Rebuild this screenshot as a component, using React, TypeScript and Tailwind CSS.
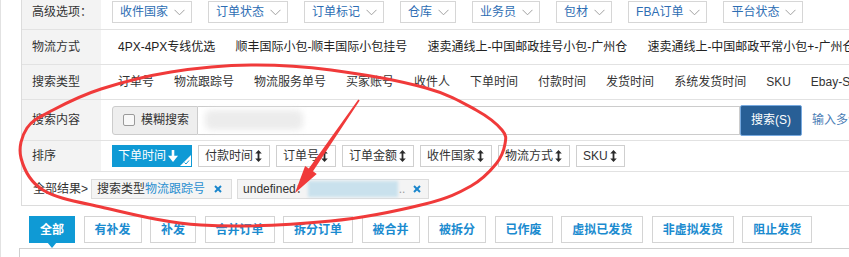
import React from "react";

type Pt = [number, number];

function closedPath(pts: Pt[]): string {
  const n = pts.length;
  let d = `M${pts[0][0]},${pts[0][1]}`;
  for (let i = 0; i < n; i++) {
    const p0 = pts[(i - 1 + n) % n];
    const p1 = pts[i];
    const p2 = pts[(i + 1) % n];
    const p3 = pts[(i + 2) % n];
    const c1: Pt = [p1[0] + (p2[0] - p0[0]) / 6, p1[1] + (p2[1] - p0[1]) / 6];
    const c2: Pt = [p2[0] - (p3[0] - p1[0]) / 6, p2[1] - (p3[1] - p1[1]) / 6];
    d += ` C${c1[0].toFixed(1)},${c1[1].toFixed(1)} ${c2[0].toFixed(1)},${c2[1].toFixed(1)} ${p2[0]},${p2[1]}`;
  }
  return d + " Z";
}

const ellipsePts: Pt[] = [
  [20, 158],
  [26, 128],
  [52, 110],
  [100, 89],
  [170, 72],
  [250, 65],
  [330, 70],
  [425, 88],
  [475, 110],
  [501, 130],
  [504, 144],
  [495, 164],
  [470, 186],
  [424, 204],
  [330, 221],
  [200, 225],
  [100, 207],
  [42, 190],
];

function Chevron() {
  return (
    <svg width="11" height="7" viewBox="0 0 11 7" className="shrink-0">
      <polyline points="0.5,0.8 5.5,5.8 10.5,0.8" fill="none" stroke="#a0a0a0" strokeWidth="1" />
    </svg>
  );
}

function UpDown() {
  return (
    <svg width="7" height="12" viewBox="0 0 7 12" className="shrink-0">
      <line x1="3.5" y1="2.5" x2="3.5" y2="9.5" stroke="#2a2a2a" strokeWidth="1.8" />
      <polygon points="0.2,3.6 3.5,0 6.8,3.6" fill="#2a2a2a" />
      <polygon points="0.2,8.4 3.5,12 6.8,8.4" fill="#2a2a2a" />
    </svg>
  );
}

function DownArrow() {
  return (
    <svg width="10" height="12" viewBox="0 0 10 12" className="shrink-0">
      <line x1="5" y1="0" x2="5" y2="7" stroke="#ffffff" strokeWidth="2.6" />
      <polygon points="0,5.8 10,5.8 5,12" fill="#ffffff" />
    </svg>
  );
}

function Cross() {
  return (
    <svg width="8" height="8" viewBox="0 0 8 8" className="shrink-0">
      <line x1="1" y1="1" x2="7" y2="7" stroke="#1a86cc" strokeWidth="2" />
      <line x1="7" y1="1" x2="1" y2="7" stroke="#1a86cc" strokeWidth="2" />
    </svg>
  );
}

const dropdowns = ["收件国家", "订单状态", "订单标记", "仓库", "业务员", "包材", "FBA订单", "平台状态"];
const logistics = [
  "4PX-4PX专线优选",
  "顺丰国际小包-顺丰国际小包挂号",
  "速卖通线上-中国邮政挂号小包-广州仓",
  "速卖通线上-中国邮政平常小包+-广州仓",
];
const searchTypes = [
  "订单号",
  "物流跟踪号",
  "物流服务单号",
  "买家账号",
  "收件人",
  "下单时间",
  "付款时间",
  "发货时间",
  "系统发货时间",
  "SKU",
  "Ebay-SRN",
];
const sorts = ["付款时间", "订单号", "订单金额", "收件国家", "物流方式", "SKU"];
const tabs = ["有补发", "补发", "合并订单", "拆分订单", "被合并", "被拆分", "已作废", "虚拟已发货", "非虚拟发货", "阻止发货"];

export default function App() {
  return (
    <div className="relative w-[849px] h-[257px] overflow-hidden bg-white border-l border-[#e2e2e2] font-['Liberation_Sans','Noto_Sans_CJK_SC',sans-serif] text-[12px] leading-[16px] text-[#333]">
      {/* filter table */}
      <div className="ml-[20px] border-l border-b border-[#dcdcdc] flex flex-col">
        {/* row 1 */}
        <div className="flex h-[30px] border-b border-[#e2e2e2]">
          <div className="w-[79px] shrink-0 bg-[#f3f3f3] pl-[10px] pt-[1px] leading-[22px]">高级选项：</div>
          <div className="flex items-start pt-[1px] pl-[11px] gap-[16px] whitespace-nowrap">
            {dropdowns.map((d) => (
              <div
                key={d}
                className="h-[22px] shrink-0 border border-[#d6d6d6] bg-white pl-[7px] pr-[6px] flex items-center gap-[6px] text-[#2d6db3]"
              >
                <span>{d}</span>
                <Chevron />
              </div>
            ))}
          </div>
        </div>
        {/* row 2 */}
        <div className="flex h-[35px] border-b border-[#e2e2e2]">
          <div className="w-[79px] shrink-0 bg-[#f3f3f3] pl-[10px] flex items-center">物流方式</div>
          <div className="flex items-center pl-[17px] gap-[20px] whitespace-nowrap text-[#222]">
            {logistics.map((l) => (
              <span key={l} className="shrink-0">{l}</span>
            ))}
          </div>
        </div>
        {/* row 3 */}
        <div className="flex h-[35px] border-b border-[#e2e2e2]">
          <div className="w-[79px] shrink-0 bg-[#f3f3f3] pl-[10px] flex items-center">搜索类型</div>
          <div className="flex items-center pl-[17px] gap-[20px] whitespace-nowrap text-[#333]">
            {searchTypes.map((s) => (
              <span key={s} className="shrink-0">{s}</span>
            ))}
          </div>
        </div>
        {/* row 4 */}
        <div className="flex h-[41px] border-b border-[#e2e2e2]">
          <div className="w-[79px] shrink-0 bg-[#f3f3f3] pl-[10px] flex items-center">搜索内容</div>
          <div className="flex items-center pl-[11px] whitespace-nowrap">
            <div className="h-[29px] w-[86px] shrink-0 border border-[#cccccc] bg-[#eeeeee] rounded-l-[3px] flex items-center pl-[10px] gap-[6px] text-[#333]">
              <span className="w-[12px] h-[12px] border border-[#9a9a9a] rounded-[2px] bg-[#f8f8f8]" />
              <span>模糊搜索</span>
            </div>
            <div className="h-[29px] w-[542px] shrink-0 border border-l-0 border-[#cccccc] bg-white flex items-center pl-[7px]">
              <div className="w-[98px] h-[20px] bg-[#ececec] rounded-[6px] blur-[3px]" />
            </div>
            <div className="h-[31px] w-[62px] shrink-0 bg-[#285f96] border border-[#78aae0] rounded-[2px] text-white flex items-center justify-center">
              搜索(S)
            </div>
            <span className="ml-[10px] text-[#4a7db5]">输入多个单号用逗号隔开</span>
          </div>
        </div>
        {/* row 5 */}
        <div className="flex h-[31px] border-b border-[#e2e2e2]">
          <div className="w-[79px] shrink-0 bg-[#f3f3f3] pl-[10px] flex items-center">排序</div>
          <div className="flex items-center pl-[11px] gap-[6px] whitespace-nowrap">
            <div className="relative h-[22px] shrink-0 bg-[#0f9ad5] border border-[#0f9ad5] text-white pl-[5px] pr-[13px] flex items-center gap-[2px]">
              <span>下单时间</span>
              <DownArrow />
              <svg width="11" height="11" viewBox="0 0 11 11" className="absolute right-0 bottom-0">
                <polygon points="11,0 11,11 0,11" fill="#ffffff" />
                <polyline points="4.5,7.5 6,9 9,5.5" fill="none" stroke="#0f9ad5" strokeWidth="1" />
              </svg>
            </div>
            {sorts.map((s) => (
              <div
                key={s}
                className="h-[22px] shrink-0 border border-[#cfcfcf] bg-white pl-[6px] pr-[7px] flex items-center gap-[2px] text-[#333]"
              >
                <span>{s}</span>
                <UpDown />
              </div>
            ))}
          </div>
        </div>
        {/* row 6 */}
        <div className="flex items-center h-[33px] pl-[11px] whitespace-nowrap">
          <span>全部结果&gt;</span>
          <div className="ml-[3px] h-[20px] shrink-0 border border-[#dcdcdc] bg-[#f4f4f4] pl-[5px] pr-[9px] flex items-center">
            <span>搜索类型</span>
            <span className="text-[#2b8fd0]">物流跟踪号</span>
            <span className="ml-[9px] flex"><Cross /></span>
          </div>
          <div className="ml-[5px] h-[20px] shrink-0 border border-[#dcdcdc] bg-[#f4f4f4] pl-[5px] pr-[7px] flex items-center">
            <span>undefined</span>
            <span className="w-[12px]">：</span>
            <div className="w-[90px] h-[16px] bg-[#c9e1ed] blur-[1.5px]" />
            <span className="ml-[1px] text-[#9a9a9a]">..</span>
            <span className="ml-[8px] flex"><Cross /></span>
          </div>
        </div>
      </div>

      {/* tabs */}
      <div className="mt-[10px] pl-[28px] flex gap-[8.5px] whitespace-nowrap font-bold">
        <div className="relative h-[27px] shrink-0 bg-[#0f9ad5] border border-[#0f9ad5] text-white px-[10px] flex items-center">
          全部
          <svg width="10" height="6" viewBox="0 0 10 6" className="absolute left-1/2 -translate-x-1/2 top-full">
            <polygon points="0,0 10,0 5,6" fill="#0f9ad5" />
          </svg>
        </div>
        {tabs.map((t) => (
          <div
            key={t}
            className="h-[27px] shrink-0 border border-[#d4d4d4] bg-white text-[#1b8bcf] px-[10px] flex items-center"
          >
            {t}
          </div>
        ))}
      </div>

      {/* lower panel */}
      <div className="mt-[5px] ml-[18px] h-[20px] border-l border-t border-[#cfcfcf]" />

      {/* red annotation overlay */}
      <svg
        width="849"
        height="257"
        viewBox="0 0 849 257"
        className="absolute left-0 top-0 pointer-events-none"
      >
        <path d={closedPath(ellipsePts)} fill="none" stroke="#f03a3a" strokeWidth="3" strokeLinejoin="round" />
        <polygon
          points="358.7,100.5 312,171.3 315.7,173.9 294,193 304.1,165.9 307.8,168.5 357.3,99.5"
          fill="#f03a3a"
        />
      </svg>
    </div>
  );
}
